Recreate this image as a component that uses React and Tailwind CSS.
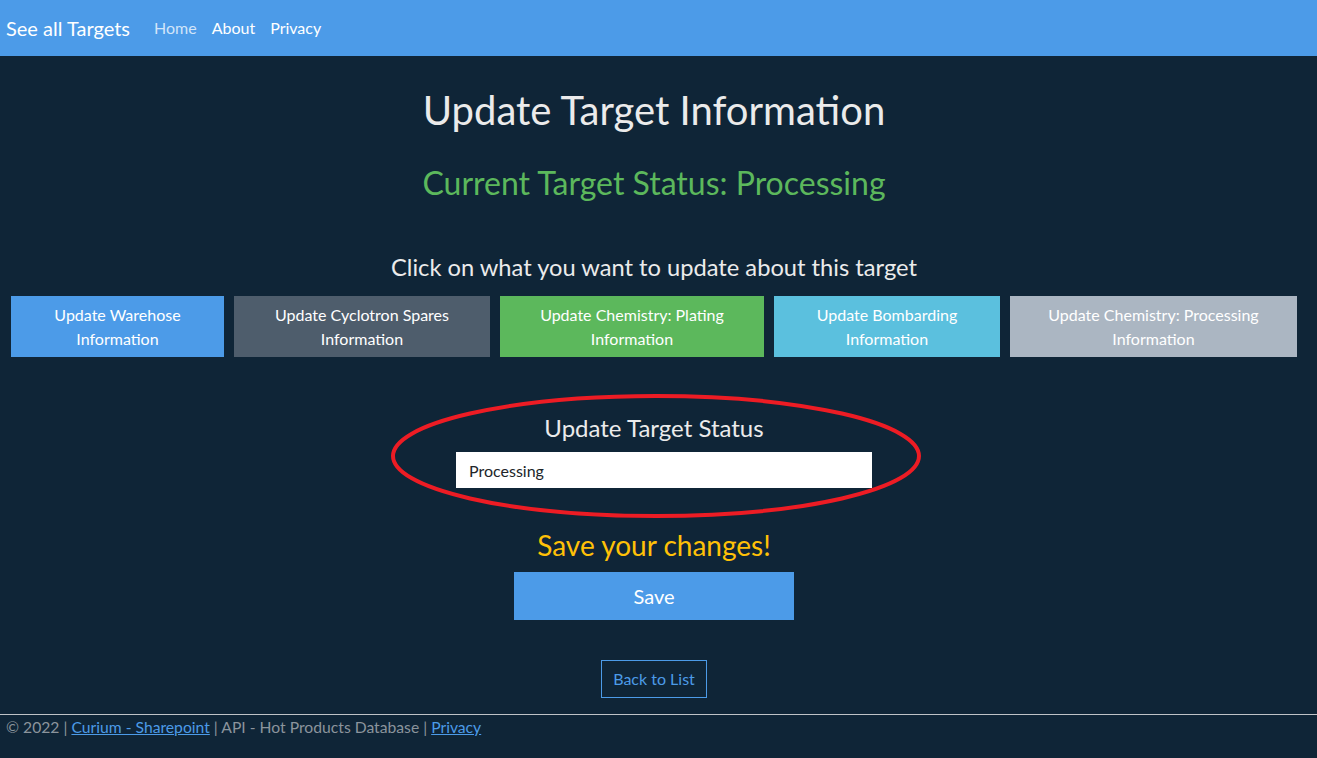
import React from 'react';

const buttons = [
    { label: 'Update Warehose Information', cls: 'w-[213px] bg-[#4c9be8]' },
    { label: 'Update Cyclotron Spares Information', cls: 'w-[256px] bg-[#4e5d6c]' },
    { label: 'Update Chemistry: Plating Information', cls: 'w-[264px] bg-[#5cb85c]' },
    { label: 'Update Bombarding Information', cls: 'w-[226px] bg-[#5bc0de]' },
    { label: 'Update Chemistry: Processing Information', cls: 'w-[287px] bg-[#abb6c2]' },
];

const App = () => {
    return (
        <div className="min-h-[758px] bg-[#0f2537] text-[#ebebeb] font-['Lato',sans-serif] text-base">
            {/* Navbar */}
            <nav className="h-14 bg-[#4c9be8] flex items-center px-[6px]">
                <span className="text-[20px] text-white mr-6">See all Targets</span>
                <div className="flex gap-[15px] text-base">
                    <span className="text-white/75">Home</span>
                    <span className="text-white">About</span>
                    <span className="text-white">Privacy</span>
                </div>
            </nav>

            <main className="flex flex-col items-center pr-[9px]">
                <h1 className="mt-[30px] text-[40px] leading-[48px]">Update Target Information</h1>
                <h2 className="mt-[30px] text-[32px] leading-[38px] text-[#5cb85c]">Current Target Status: Processing</h2>
                <p className="mt-[51px] text-[23.7px] leading-7">Click on what you want to update about this target</p>

                {/* Update buttons */}
                <div className="mt-[15px] self-start ml-[11px] flex gap-[10px]">
                    {buttons.map((b) => (
                        <button
                            key={b.label}
                            className={`${b.cls} h-[61px] px-8 text-white text-base leading-6 text-center`}
                        >
                            {b.label}
                        </button>
                    ))}
                </div>

                {/* Status field */}
                <div className="relative mt-[57px] flex flex-col items-center">
                    <svg
                        className="absolute left-[-47px] top-[-22px] pointer-events-none"
                        width="534"
                        height="128"
                        viewBox="0 0 534 128"
                    >
                        <ellipse cx="267" cy="64" rx="263" ry="60" fill="none" stroke="#ed1c24" strokeWidth="4" />
                    </svg>
                    <label className="text-2xl leading-7">Update Target Status</label>
                    <input
                        readOnly
                        value="Processing"
                        className="mt-[10px] ml-5 w-[416px] h-9 bg-white text-[#212529] px-[13px] text-base outline-none"
                    />
                </div>

                <h3 className="mt-10 text-[28px] leading-[34px] text-[#ffc107]">Save your changes!</h3>
                <button className="mt-[10px] w-[280px] h-12 bg-[#4c9be8] text-white text-xl">Save</button>

                <button className="mt-10 w-[106px] h-[38px] border border-[#4c9be8] text-[#4c9be8] text-base">Back to List</button>
            </main>

            {/* Footer */}
            <footer className="mt-4 border-t border-[#ebebeb]/80 px-[6px] pt-[1px] text-[15.7px] text-[#8b949c]">
                © 2022 | <a className="text-[#4c9be8] underline">Curium - Sharepoint</a> | API - Hot Products Database | <a className="text-[#4c9be8] underline">Privacy</a>
            </footer>
        </div>
    );
};

export default App;
